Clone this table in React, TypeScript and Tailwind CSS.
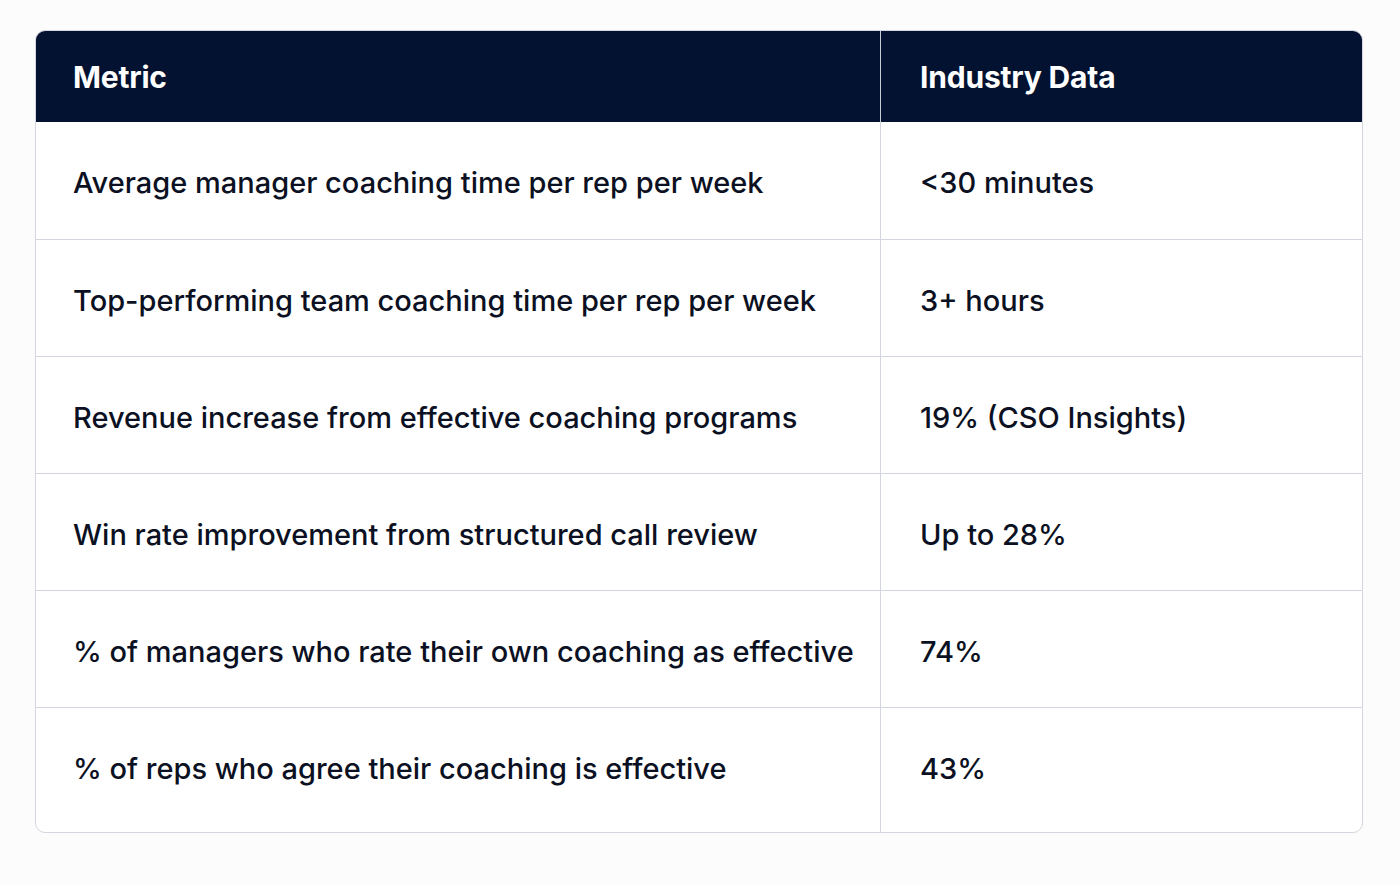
import React from 'react';

const rows = [
  ['Average manager coaching time per rep per week', '<30 minutes'],
  ['Top-performing team coaching time per rep per week', '3+ hours'],
  ['Revenue increase from effective coaching programs', '19% (CSO Insights)'],
  ['Win rate improvement from structured call review', 'Up to 28%'],
  ['% of managers who rate their own coaching as effective', '74%'],
  ['% of reps who agree their coaching is effective', '43%'],
];

const App = () => {
  return (
    <div className="min-h-[885px] w-[1400px] bg-[#fcfcfd] pt-[30px] pl-[35px]" style={{ fontFamily: 'Inter, "Noto Sans", sans-serif' }}>
      <div className="w-[1328px] overflow-hidden rounded-[10px] border border-[#d3d6de] bg-white text-[#0b1122]">
        <div className="grid h-[91px] grid-cols-[845px_1fr] bg-[#031230] text-white">
          <div className="flex items-center border-r border-[#c9ccd4] pl-[37px] pt-[1px] text-[30px] font-bold tracking-[-0.2px]">Metric</div>
          <div className="flex items-center pl-[39px] pt-[1px] text-[30px] font-bold tracking-[-0.2px]">Industry Data</div>
        </div>
        {rows.map(([metric, value], i) => {
          const last = i === rows.length - 1;
          return (
            <div
              key={metric}
              className={`grid grid-cols-[845px_1fr] ${i > 0 ? 'border-t border-[#d3d6de]' : ''} ${last ? 'h-[125px]' : 'h-[117px]'}`}
            >
              <div className={`flex items-center border-r border-[#d3d6de] pl-[37px] pt-[5px] text-[29px] font-medium ${last ? 'pb-[8px]' : ''}`}>{metric}</div>
              <div className={`flex items-center pl-[39px] pt-[5px] text-[29px] font-medium ${last ? 'pb-[8px]' : ''}`}>{value}</div>
            </div>
          );
        })}
      </div>
    </div>
  );
};

export default App;
